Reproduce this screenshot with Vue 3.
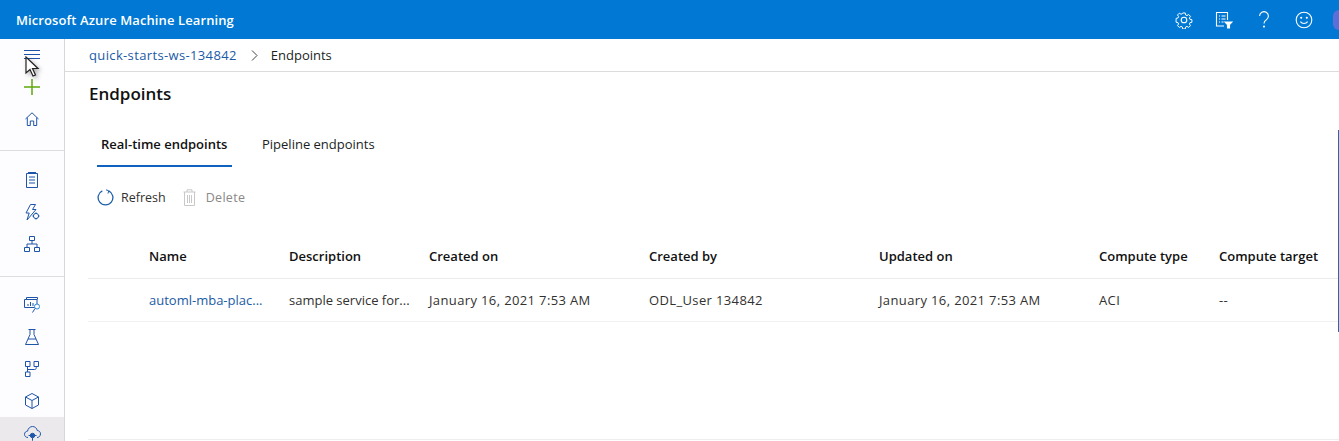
<script setup>
const columns = ['Name', 'Description', 'Created on', 'Created by', 'Updated on', 'Compute type', 'Compute target']
const row = {
  name: 'automl-mba-plac...',
  cells: [
    { text: 'sample service for...' },
    { text: 'January 16, 2021 7:53 AM', wide: true },
    { text: 'ODL_User 134842', wide: true },
    { text: 'January 16, 2021 7:53 AM', wide: true },
    { text: 'ACI', wide: true },
    { text: '--', wide: true },
  ],
}
</script>

<template>
  <div class="page">
    <header class="topbar">
      <span class="brand">Microsoft Azure Machine Learning</span>
      <div class="top-icons">
        <!-- settings -->
        <svg width="18" height="18" viewBox="0 0 18 18" fill="none" stroke="#fff" stroke-width="1.1">
          <circle cx="9" cy="9" r="2.8" />
          <path d="M7.6 1.2h2.8l.4 2.2 1.5.7 1.9-1.2 2 2-1.2 1.9.6 1.4 2.2.5v2.800l-2.200.5-.6 1.400 1.200 1.900-2 2-1.900-1.200-1.500.7-.4 2.200H7.600l-.4-2.200-1.500-.7-1.900 1.200-2-2 1.200-1.900-.6-1.400-2.200-.5V7.200l2.200-.5.6-1.400-1.200-1.900 2-2 1.900 1.200 1.500-.7z" transform="translate(.9 .9) scale(.9)" />
        </svg>
        <!-- feed with filter -->
        <svg width="18" height="18" viewBox="0 0 18 18" fill="none" stroke="#fff" stroke-width="1.1">
          <path d="M9 15H1.5V1.500h11V9" />
          <path d="M4 5h1M6.500 5h4M4 8h1M6.500 8h4M4 11h1M6.500 11h2" />
          <path d="M10 11h7l-2.500 2.600V17h-2v-3.400z" fill="#fff" />
        </svg>
        <!-- help -->
        <svg width="18" height="18" viewBox="0 0 18 18" fill="none" stroke="#fff" stroke-width="1.1">
          <path d="M4.600 5a4.400 4.400 0 1 1 6.600 3.900C9.800 9.800 9 10.600 9 12.400" />
          <circle cx="9" cy="15.600" r=".5" fill="#fff" />
        </svg>
        <!-- smile -->
        <svg width="18" height="18" viewBox="0 0 18 18" fill="none" stroke="#fff" stroke-width="1.1">
          <circle cx="9" cy="9" r="7.800" />
          <path d="M5.400 10.600c1.800 2.500 5.400 2.500 7.200 0" />
          <circle cx="6.200" cy="6.800" r=".5" fill="#fff" />
          <circle cx="11.800" cy="6.800" r=".5" fill="#fff" />
        </svg>
      </div>
      <span class="avatar"></span>
    </header>

    <div class="body">
      <nav class="sidebar">
        <section class="nav-group first">
          <svg class="menu" width="16" height="9" viewBox="0 0 16 9" fill="none" stroke="#1f55a8">
            <path d="M0 .5h16M0 4.500h16M0 8.500h16" />
          </svg>
          <svg class="plus" width="16" height="16" viewBox="0 0 16 16" fill="none" stroke="#5fa80c" stroke-width="1.500">
            <path d="M8 0v16M0 8h16" />
          </svg>
          <svg width="14" height="14" viewBox="0 0 14 14" fill="none" stroke="#1f55a8">
            <path d="M.5 7 7 .8 13.500 7M2.300 5.600v7.900h3V9h3.400v4.500h3V5.600" />
          </svg>
        </section>
        <section class="nav-group second">
          <svg width="12" height="16" viewBox="0 0 12 16" fill="none" stroke="#1f55a8">
            <path d="M.5 1.500h11v14H.5zM3 5h6M3 8h6M3 11h6M2 .5h8" />
          </svg>
          <svg class="bolt" width="16" height="17" viewBox="0 0 16 17" fill="none" stroke="#1f55a8">
            <path d="M6.500.5h5L8.500 5.500h3.500L3 16l2.200-7H2z" />
            <circle cx="12" cy="12" r="2.600" />
            <path d="M12 8.400v1M12 14.600v1M8.400 12h1M14.600 12h1" />
          </svg>
          <svg width="16" height="16" viewBox="0 0 16 16" fill="none" stroke="#1f55a8">
            <path d="M5.500.5h5v4h-5zM.5 11.500h5v4h-5zM10.500 11.500h5v4h-5zM8 4.500V8M3 11.500V8h10v3.500" />
          </svg>
        </section>
        <section class="nav-group third">
          <svg width="17" height="16" viewBox="0 0 17 16" fill="none" stroke="#1f55a8">
            <path d="M2.500 2.500V.5h11v2M.5 2.500h12.500v8H.5z" />
            <path d="M4 9V7M6.500 9V5M9 9V6" />
            <circle cx="13" cy="9.500" r="2.500" fill="#fff" stroke="#2b88d8" />
            <path d="M11 11.500 8.500 15.500" />
          </svg>
          <svg width="14" height="16" viewBox="0 0 14 16" fill="none" stroke="#1f55a8">
            <path d="M3.500.5h7M5 .5v5L.5 15.500h13L9 5.500v-5M3 10h8" />
          </svg>
          <svg width="14" height="16" viewBox="0 0 14 16" fill="none" stroke="#1f55a8">
            <path d="M.5.5h4.500v5H.5zM9 .5h4.500v5H9zM.5 11h4.500v4.500H.5zM2.500 5.500V11M2.500 8.500h7c1.500 0 1.800-1 1.800-2V5.500" />
          </svg>
          <svg width="14" height="16" viewBox="0 0 14 16" fill="none" stroke="#1f55a8">
            <path d="M7 .5 13.500 4v8L7 15.500.5 12V4zM.5 4 7 7.500 13.500 4M7 7.500v8" />
          </svg>
          <div class="nav-active">
            <svg width="17" height="16" viewBox="0 0 17 16" fill="none" stroke="#1f55a8">
              <path d="M4 11.500C1.800 11.500.5 10 .5 8.300c0-1.800 1.300-3 3-3.100C4 2.500 6 .5 8.500.5c2.400 0 4.300 1.700 4.800 4 1.900.1 3.200 1.600 3.200 3.400 0 1.900-1.400 3.600-3.500 3.600" />
              <circle cx="8.500" cy="9.500" r="2.200" fill="#1f55a8" />
              <path d="M8.500 11.700v3M4.500 9.500h8" />
            </svg>
          </div>
        </section>
      </nav>

      <main class="main">
        <div class="crumbs">
          <a class="crumb-link">quick-starts-ws-134842</a>
          <svg width="7" height="11" viewBox="0 0 7 11" fill="none" stroke="#444">
            <path d="m1 .5 5 5-5 5" />
          </svg>
          <span class="crumb-current">Endpoints</span>
        </div>

        <div class="content">
          <h1 class="title">Endpoints</h1>

          <div class="tabs">
            <div class="tab active">Real-time endpoints</div>
            <div class="tab">Pipeline endpoints</div>
          </div>

          <div class="toolbar">
            <button class="tool">
              <svg width="17" height="17" viewBox="0 0 17 17" fill="none" stroke="#1f5fa8" stroke-width="1.300">
                <path d="M5.300 1.800a7.400 7.400 0 1 0 6.400 0" />
                <path d="M9 .8 11.700 1.800 11 4.500" stroke-width="1" />
              </svg>
              Refresh
            </button>
            <button class="tool disabled">
              <svg width="13" height="17" viewBox="0 0 13 17" fill="none" stroke="#c8c8c8">
                <path d="M.5 3h12M4 3V.8h5V3M1.500 3v13.500h10V3M4.500 6v8M6.500 6v8M8.500 6v8" />
              </svg>
              Delete
            </button>
          </div>

          <div class="table">
            <div class="grid head">
              <span v-for="col in columns" :key="col">{{ col }}</span>
            </div>
            <div class="grid row">
              <a class="cell-link">{{ row.name }}</a>
              <span v-for="(cell, i) in row.cells" :key="i" :class="{ wide: cell.wide }">{{ cell.text }}</span>
            </div>
          </div>
          <div class="table-end"></div>
        </div>
      </main>
    </div>

    <!-- mouse pointer from the recording -->
    <svg class="pointer" width="16" height="22" viewBox="0 0 16 22">
      <path d="M1 1v16l4-3.500 3 6.500 2.500-1-3-6.500h5.500z" fill="#fff" stroke="#222" stroke-width="1.200" />
    </svg>
    <span class="scroll-mark"></span>
  </div>
</template>

<style>
html,
body {
  margin: 0;
  background: #fff;
  overflow: hidden;
}
</style>

<style scoped>
.page {
  position: relative;
  width: 1339px;
  height: 441px;
  overflow: hidden;
  font-family: "Open Sans", "Noto Sans", sans-serif;
  font-size: 13px;
  color: #323130;
  background: #fff;
}

.topbar {
  display: flex;
  align-items: center;
  height: 39px;
  padding-left: 16px;
  background: #0078d4;
  color: #fff;
}

.brand {
  font-size: 13px;
  font-weight: 600;
  letter-spacing: 0.100px;
}

.top-icons {
  display: flex;
  gap: 22px;
  margin-left: auto;
  margin-right: 20px;
}

.avatar {
  width: 6px;
  height: 20px;
  border-radius: 10px 0 0 10px;
  background: #5a6fd8;
}

.body {
  display: flex;
  height: 402px;
}

.sidebar {
  flex: none;
  box-sizing: border-box;
  width: 65px;
  border-right: 1px solid #d8d6da;
  background: #fdfcfe;
}

.nav-group {
  display: flex;
  flex-direction: column;
  align-items: center;
}

.nav-group.first {
  box-sizing: border-box;
  height: 112px;
  padding-top: 11px;
  border-bottom: 1px solid #dedcdf;
}

.menu {
  margin-bottom: 20px;
}

.plus {
  margin-bottom: 17px;
}

.nav-group.second {
  box-sizing: border-box;
  height: 126px;
  padding-top: 21px;
  gap: 15px;
  border-bottom: 1px solid #dedcdf;
}

.bolt {
  margin-top: 1px;
}

.nav-group.third {
  padding-top: 20px;
  gap: 16px;
}

.nav-active {
  display: flex;
  justify-content: center;
  width: 100%;
  height: 30px;
  margin-top: -8px;
  padding-top: 9px;
  background: #ebe9ec;
}

.main {
  flex: 1;
  min-width: 0;
}

.crumbs {
  display: flex;
  align-items: center;
  gap: 14px;
  box-sizing: border-box;
  height: 33px;
  padding-left: 24px;
  border-bottom: 1px solid #dddbdd;
  color: #201f1e;
}

.crumb-link {
  color: #1a5ba6;
  letter-spacing: 0.360px;
}

.crumb-current {
  margin-left: -1px;
}

.cell-link {
  color: #1a5ba6;
}

.wide {
  letter-spacing: 0.370px;
}

.content {
  padding-left: 23px;
}

.title {
  height: 32px;
  margin: 0;
  padding: 11px 0 0 1px;
  font-size: 17px;
  font-weight: 600;
  line-height: 22px;
  color: #111;
}

.tabs {
  display: flex;
  gap: 26px;
  margin-top: 15px;
  padding-left: 9px;
}

.tab {
  box-sizing: border-box;
  height: 37px;
  padding: 5px 0 0 4px;
  color: #201f1e;
}

.tab.active {
  width: 135px;
  font-weight: 600;
  color: #111;
  border-bottom: 2px solid #0f62c0;
}

.toolbar {
  display: flex;
  gap: 17px;
  margin-top: 20px;
  padding-left: 9px;
}

.tool {
  display: flex;
  align-items: center;
  gap: 7px;
  height: 20px;
  padding: 0;
  border: 0;
  background: none;
  font: inherit;
  font-size: 12.500px;
  color: #323130;
}

.tool.disabled {
  gap: 10px;
  color: #8a8886;
  letter-spacing: 0.300px;
}

.table {
  margin-top: 31px;
}

.grid {
  display: grid;
  grid-template-columns: 140px 140px 220px 230px 220px 120px 1fr;
  align-items: center;
  padding-left: 61px;
  border-bottom: 1px solid #edebe9;
}

.head {
  box-sizing: border-box;
  height: 41px;
  padding-bottom: 5px;
  font-weight: 600;
  color: #111;
}

.row {
  box-sizing: border-box;
  height: 43px;
  border-bottom-color: #f3f2f1;
}

.table-end {
  height: 1px;
  margin-top: 117px;
  background: #efedf0;
}

.pointer {
  position: absolute;
  left: 25px;
  top: 56px;
  filter: drop-shadow(2px 2px 2px rgba(0, 0, 0, 0.3));
}

.scroll-mark {
  position: absolute;
  right: 0;
  top: 130px;
  width: 1px;
  height: 202px;
  background: #1f6bb5;
}
</style>
